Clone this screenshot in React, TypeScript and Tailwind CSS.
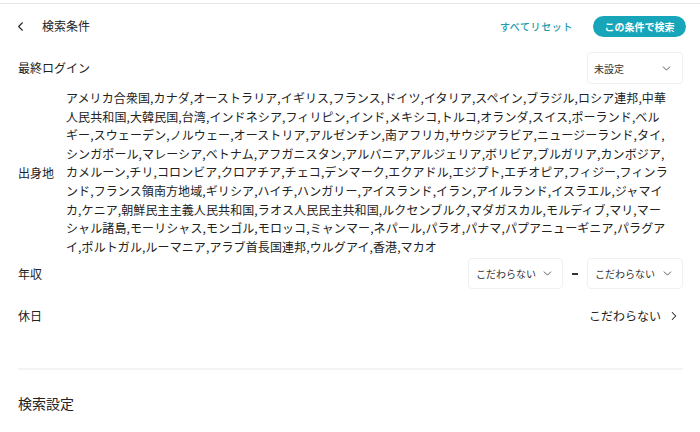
import { ChevronDown, ChevronLeft, ChevronRight } from 'lucide-react'

// wrapped the same way as the original list
const countryLines = [
  'アメリカ合衆国,カナダ,オーストラリア,イギリス,フランス,ドイツ,イタリア,スペイン,ブラジル,ロシア連邦,中華',
  '人民共和国,大韓民国,台湾,インドネシア,フィリピン,インド,メキシコ,トルコ,オランダ,スイス,ポーランド,ベル',
  'ギー,スウェーデン,ノルウェー,オーストリア,アルゼンチン,南アフリカ,サウジアラビア,ニュージーランド,タイ,',
  'シンガポール,マレーシア,ベトナム,アフガニスタン,アルバニア,アルジェリア,ボリビア,ブルガリア,カンボジア,',
  'カメルーン,チリ,コロンビア,クロアチア,チェコ,デンマーク,エクアドル,エジプト,エチオピア,フィジー,フィンラ',
  'ンド,フランス領南方地域,ギリシア,ハイチ,ハンガリー,アイスランド,イラン,アイルランド,イスラエル,ジャマイ',
  'カ,ケニア,朝鮮民主主義人民共和国,ラオス人民民主共和国,ルクセンブルク,マダガスカル,モルディブ,マリ,マー',
  'シャル諸島,モーリシャス,モンゴル,モロッコ,ミャンマー,ネパール,パラオ,パナマ,パプアニューギニア,パラグア',
  'イ,ポルトガル,ルーマニア,アラブ首長国連邦,ウルグアイ,香港,マカオ',
]

function Select({ label, w }: { label: string; w: string }) {
  return (
    <div className={`flex h-[31px] ${w} items-center justify-between rounded-[4px] border border-[#eef1f1] pl-[7px] pr-[8px] text-[10px] text-[#333]`}>
      <span>{label}</span>
      <ChevronDown className="h-[13px] w-[13px] text-[#444]" strokeWidth={1.6} />
    </div>
  )
}

export default function App() {
  return (
    <div className="min-h-[432px] bg-white font-['Noto_Sans_CJK_JP',sans-serif] text-[#222]">
      <div className="mt-[3px] border-t border-[#e6e6e6]" />
      {/* header */}
      <div className="flex h-[44px] items-center pl-[13px] pr-[14px]">
        <ChevronLeft className="h-[15px] w-[15px] text-[#222]" strokeWidth={1.7} />
        <span className="ml-[14px] text-[12px]">検索条件</span>
        <span className="ml-auto text-[10px] font-medium tracking-[0.6px] text-[#1a9aad]">すべてリセット</span>
        <button className="ml-[20px] h-[21px] w-[93px] rounded-full bg-[#17a5b9] text-[10px] font-bold text-white">
          この条件で検索
        </button>
      </div>

      <div className="pl-[18px] pr-[17px]">
        {/* last login */}
        <div className="mt-[4px] flex h-[32px] items-center justify-between">
          <span className="text-[12px]">最終ログイン</span>
          <div className="flex h-[32px] w-[96px] items-center justify-between rounded-[4px] border border-[#eef1f1] pl-[6px] pr-[9px] text-[10px] text-[#333]">
            <span>未設定</span>
            <ChevronDown className="h-[13px] w-[13px] text-[#444]" strokeWidth={1.6} />
          </div>
        </div>

        {/* origin */}
        <div className="mt-[5px] flex items-center">
          <span className="w-[48px] shrink-0 text-[12px]">出身地</span>
          <div className="text-[12px] leading-[18.6px] tracking-[0.1px] text-[#222]">
            {countryLines.map((line, i) => (
              <div key={i} className="whitespace-nowrap">{line}</div>
            ))}
          </div>
        </div>

        {/* income */}
        <div className="mt-[2px] flex h-[31px] items-center">
          <span className="text-[12px]">年収</span>
          <div className="ml-auto flex items-center">
            <Select label="こだわらない" w="w-[95px]" />
            <span className="mx-[9px] h-[2px] w-[6px] bg-[#333]" />
            <Select label="こだわらない" w="w-[96px]" />
          </div>
        </div>

        {/* holidays */}
        <div className="mt-[12px] flex h-[30px] items-center">
          <span className="text-[12px]">休日</span>
          <div className="ml-auto flex items-center gap-[6px] pr-[2px]">
            <span className="text-[12px]">こだわらない</span>
            <ChevronRight className="h-[14px] w-[14px] text-[#222]" strokeWidth={1.8} />
          </div>
        </div>

        <div className="mt-[37px] h-[2px] bg-[#f3f4f4]" />

        <div className="mt-[23px] text-[14px]">検索設定</div>
      </div>
    </div>
  )
}
